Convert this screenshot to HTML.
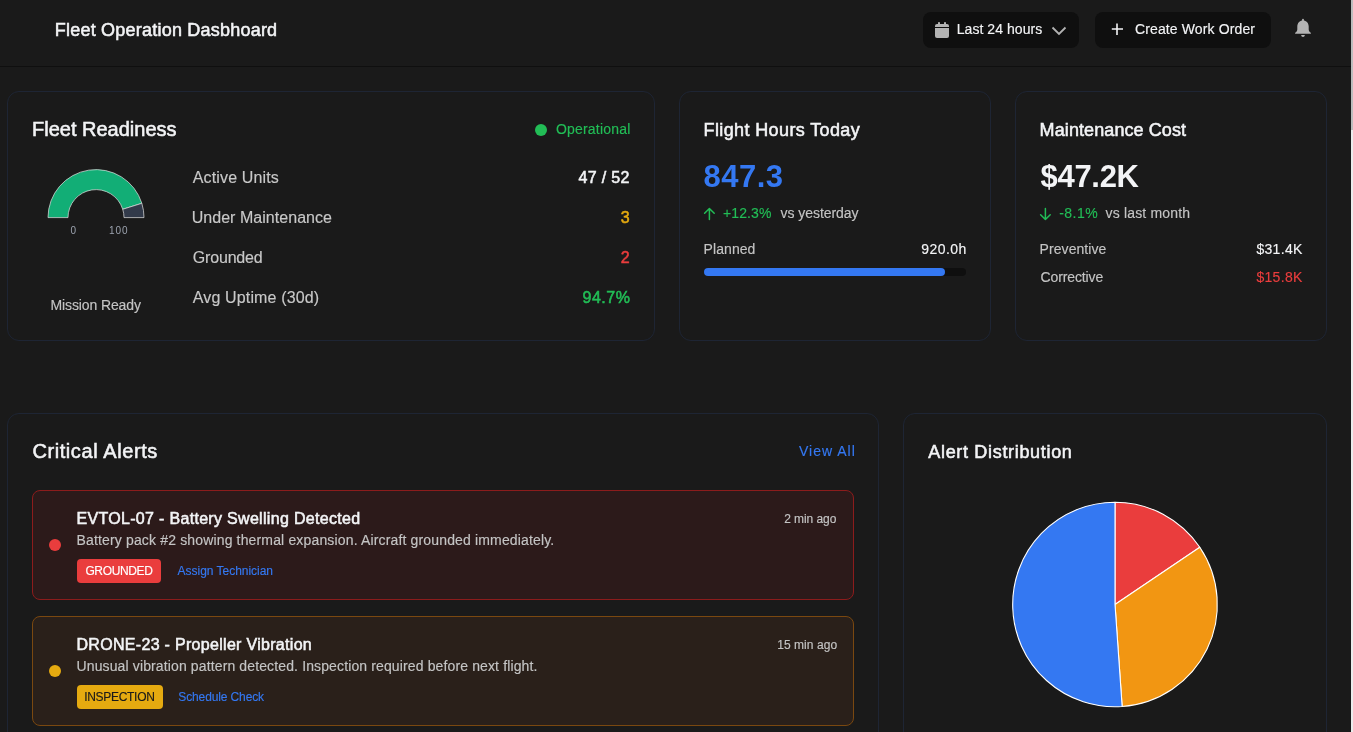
<!DOCTYPE html>
<html><head><meta charset="utf-8">
<style>
html,body{margin:0;padding:0;width:1353px;height:732px;overflow:hidden;background:#1a1a1a;}
body{position:relative;font-family:"Liberation Sans",sans-serif;color:#fff;}
#wrap{position:absolute;left:0;top:0;width:1353px;height:732px;will-change:transform;}
.t{position:absolute;line-height:1;white-space:nowrap;}
.card{position:absolute;box-sizing:border-box;border:1px solid #1e2534;border-radius:12px;}
.btn{position:absolute;background:#0f0f0f;border-radius:8px;}
.alert{position:absolute;box-sizing:border-box;border:1px solid;border-radius:8px;}
.dot{position:absolute;border-radius:50%;}
</style></head><body><div id="wrap">
<div style="position:absolute;left:0;top:66px;width:1353px;height:1px;background:#0f0f0f;"></div>
<div class="btn" style="left:923px;top:12px;width:156px;height:36px;"></div>
<svg style="position:absolute;left:935px;top:21px" width="14" height="17" viewBox="0 0 14 17">
<rect x="0" y="3" width="14" height="14" rx="2" fill="#b3b3b3"/>
<rect x="3" y="1" width="2" height="3" rx="0.8" fill="#b3b3b3"/>
<rect x="9" y="1" width="2" height="3" rx="0.8" fill="#b3b3b3"/>
<rect x="0" y="6" width="14" height="1" fill="#0f0f0f"/>
</svg>
<svg style="position:absolute;left:1051px;top:26px" width="16" height="10" viewBox="0 0 16 10">
<path d="M1.5 1.5 L8 8 L14.5 1.5" fill="none" stroke="#b3b3b3" stroke-width="1.8"/>
</svg>
<div class="btn" style="left:1095px;top:12px;width:176px;height:36px;"></div>
<svg style="position:absolute;left:1110px;top:22px" width="14" height="14" viewBox="0 0 14 14">
<path d="M7 1.5 V13 M1.8 7 H13" stroke="#f3f4f6" stroke-width="1.6" fill="none"/>
</svg>
<svg style="position:absolute;left:1290px;top:15px" width="26" height="26" viewBox="1290 15 26 26">
<rect x="1302.1" y="18.8" width="1.8" height="2.8" rx="0.9" fill="#b3b3b3"/>
<path d="M1303 20.6 C1299.6 20.6 1297.3 23.2 1297.3 26.6 V29.4 C1297.3 30.8 1296.2 32 1295.2 32.8 C1294.9 33.2 1295.1 33.8 1295.6 33.8 H1310.4 C1310.9 33.8 1311.1 33.2 1310.8 32.8 C1309.8 32 1308.7 30.8 1308.7 29.4 V26.6 C1308.7 23.2 1306.4 20.6 1303 20.6 Z" fill="#b3b3b3"/>
<path d="M1301.2 35 H1304.8 C1304.8 36.1 1304 37 1303 37 C1302 37 1301.2 36.1 1301.2 35 Z" fill="#b3b3b3"/>
</svg>
<div style="position:absolute;left:1351px;top:0;width:2px;height:732px;background:#ececec;"></div>
<div style="position:absolute;left:1351px;top:0;width:2px;height:130px;background:#bdbdbd;"></div>

<div class="card" style="left:7px;top:91px;width:648px;height:250px;"></div>
<div class="dot" style="left:535px;top:124px;width:12px;height:12px;background:#22bd56;"></div>
<svg style="position:absolute;left:40px;top:160px" width="112" height="64" viewBox="40 160 112 64">
<path d="M48.00 217.60 A48 48 0 0 1 141.83 203.32 L122.73 209.27 A28 28 0 0 0 68.00 217.60 Z" fill="#12ae76" stroke="#e5e5e5" stroke-width="0.7"/>
<path d="M141.83 203.32 A48 48 0 0 1 144.00 217.60 L124.00 217.60 A28 28 0 0 0 122.73 209.27 Z" fill="#323a4a" stroke="#e5e5e5" stroke-width="0.7"/>
</svg>

<div class="card" style="left:679px;top:91px;width:312px;height:250px;"></div>
<svg style="position:absolute;left:700px;top:204px" width="20" height="20" viewBox="700 204 20 20">
<path d="M709.4 208.6 V219.4 M704.6 213.3 L709.4 208.5 L714.2 213.3" fill="none" stroke="#22bd56" stroke-width="1.5" stroke-linecap="round" stroke-linejoin="round"/>
</svg>
<div style="position:absolute;left:704px;top:268px;width:262px;height:8px;border-radius:4px;background:#0f0f0f;"></div>
<div style="position:absolute;left:704px;top:268px;width:241px;height:8px;border-radius:4px;background:#3478f2;"></div>

<div class="card" style="left:1015px;top:91px;width:312px;height:250px;"></div>
<svg style="position:absolute;left:1036px;top:204px" width="20" height="20" viewBox="1036 204 20 20">
<path d="M1045.4 208.6 V219.4 M1040.6 214.7 L1045.4 219.5 L1050.2 214.7" fill="none" stroke="#22bd56" stroke-width="1.5" stroke-linecap="round" stroke-linejoin="round"/>
</svg>

<div class="card" style="left:7px;top:413px;width:872px;height:340px;"></div>
<div class="alert" style="left:32px;top:490px;width:822px;height:110px;background:#2c1a1a;border-color:#8c1c1c;"></div>
<div class="dot" style="left:49px;top:539px;width:12px;height:12px;background:#ea3d3d;"></div>
<div style="position:absolute;left:77px;top:559px;width:84px;height:24px;border-radius:4px;background:#ea3d3d;"></div>
<div class="alert" style="left:32px;top:616px;width:822px;height:110px;background:#2a201a;border-color:#7a4810;"></div>
<div class="dot" style="left:49px;top:665px;width:12px;height:12px;background:#e5aa10;"></div>
<div style="position:absolute;left:77px;top:685px;width:86px;height:24px;border-radius:4px;background:#e5aa10;"></div>

<div class="card" style="left:903px;top:413px;width:424px;height:340px;"></div>
<svg style="position:absolute;left:1005px;top:494px" width="220" height="220" viewBox="1005 494 220 220">
<path d="M1115 604.5 L1115.00 502.20 A102.3 102.3 0 0 1 1199.81 547.29 Z" fill="#ea3d3d" stroke="#ffffff" stroke-width="1.1" stroke-linejoin="round"/>
<path d="M1115 604.5 L1199.81 547.29 A102.3 102.3 0 0 1 1122.14 706.55 Z" fill="#f29612" stroke="#ffffff" stroke-width="1.1" stroke-linejoin="round"/>
<path d="M1115 604.5 L1122.14 706.55 A102.3 102.3 0 1 1 1115.00 502.20 Z" fill="#3478f2" stroke="#ffffff" stroke-width="1.1" stroke-linejoin="round"/>
</svg>
<div class="t" style="left:54.80px;top:21px;font-size:18px;color:#f3f4f6;letter-spacing:0.217px;-webkit-text-stroke:0.55px currentColor;">Fleet Operation Dasbhoard</div>
<div class="t" style="left:956.70px;top:22px;font-size:14px;color:#f3f4f6;letter-spacing:0.058px;-webkit-text-stroke:0.15px currentColor;">Last 24 hours</div>
<div class="t" style="left:1135.00px;top:22px;font-size:14px;color:#f3f4f6;letter-spacing:0.125px;-webkit-text-stroke:0.15px currentColor;">Create Work Order</div>
<div class="t" style="left:32.00px;top:119px;font-size:20px;color:#f3f4f6;letter-spacing:0.000px;-webkit-text-stroke:0.55px currentColor;">Fleet Readiness</div>
<div class="t" style="left:555.90px;top:122px;font-size:14px;color:#22bd56;letter-spacing:0.210px;-webkit-text-stroke:0.15px currentColor;">Operational</div>
<div class="t" style="left:70.50px;top:226px;font-size:10px;color:#9ca3af;letter-spacing:0.000px;">0</div>
<div class="t" style="left:108.90px;top:226px;font-size:10px;color:#9ca3af;letter-spacing:1.050px;">100</div>
<div class="t" style="left:50.50px;top:298px;font-size:14px;color:#c4c4c4;letter-spacing:-0.117px;-webkit-text-stroke:0.15px currentColor;">Mission Ready</div>
<div class="t" style="left:192.70px;top:170px;font-size:16px;color:#c8c8c8;letter-spacing:0.155px;-webkit-text-stroke:0.15px currentColor;">Active Units</div>
<div class="t" style="left:191.70px;top:210px;font-size:16px;color:#c8c8c8;letter-spacing:0.038px;-webkit-text-stroke:0.15px currentColor;">Under Maintenance</div>
<div class="t" style="left:192.70px;top:250px;font-size:16px;color:#c8c8c8;letter-spacing:-0.157px;-webkit-text-stroke:0.15px currentColor;">Grounded</div>
<div class="t" style="left:192.70px;top:290px;font-size:16px;color:#c8c8c8;letter-spacing:0.153px;-webkit-text-stroke:0.15px currentColor;">Avg Uptime (30d)</div>
<div class="t" style="left:578.60px;top:170px;font-size:16px;color:#f3f4f6;letter-spacing:0.317px;-webkit-text-stroke:0.55px currentColor;">47 / 52</div>
<div class="t" style="left:620.80px;top:210px;font-size:16px;color:#e5aa10;letter-spacing:0.000px;-webkit-text-stroke:0.55px currentColor;">3</div>
<div class="t" style="left:620.80px;top:250px;font-size:16px;color:#ea3d3d;letter-spacing:0.000px;-webkit-text-stroke:0.55px currentColor;">2</div>
<div class="t" style="left:582.50px;top:290px;font-size:16px;color:#22bd56;letter-spacing:0.500px;-webkit-text-stroke:0.55px currentColor;">94.7%</div>
<div class="t" style="left:703.60px;top:121px;font-size:18px;color:#f3f4f6;letter-spacing:0.376px;-webkit-text-stroke:0.55px currentColor;">Flight Hours Today</div>
<div class="t" style="left:703.60px;top:161px;font-size:31px;color:#3478f2;letter-spacing:0.475px;font-weight:bold;">847.3</div>
<div class="t" style="left:723.00px;top:206px;font-size:14px;color:#22bd56;letter-spacing:0.100px;-webkit-text-stroke:0.15px currentColor;">+12.3%</div>
<div class="t" style="left:780.50px;top:206px;font-size:14px;color:#c4c4c4;letter-spacing:-0.045px;-webkit-text-stroke:0.15px currentColor;">vs yesterday</div>
<div class="t" style="left:703.60px;top:242px;font-size:14px;color:#c4c4c4;letter-spacing:0.067px;-webkit-text-stroke:0.15px currentColor;">Planned</div>
<div class="t" style="left:921.30px;top:242px;font-size:14px;color:#f3f4f6;letter-spacing:0.440px;-webkit-text-stroke:0.15px currentColor;">920.0h</div>
<div class="t" style="left:1039.60px;top:121px;font-size:18px;color:#f3f4f6;letter-spacing:0.093px;-webkit-text-stroke:0.55px currentColor;">Maintenance Cost</div>
<div class="t" style="left:1040.60px;top:161px;font-size:31px;color:#f3f4f6;letter-spacing:-0.320px;font-weight:bold;">$47.2K</div>
<div class="t" style="left:1059.20px;top:206px;font-size:14px;color:#22bd56;letter-spacing:0.475px;-webkit-text-stroke:0.15px currentColor;">-8.1%</div>
<div class="t" style="left:1105.60px;top:206px;font-size:14px;color:#c4c4c4;letter-spacing:0.158px;-webkit-text-stroke:0.15px currentColor;">vs last month</div>
<div class="t" style="left:1039.60px;top:242px;font-size:14px;color:#c4c4c4;letter-spacing:0.067px;-webkit-text-stroke:0.15px currentColor;">Preventive</div>
<div class="t" style="left:1256.40px;top:242px;font-size:14px;color:#f3f4f6;letter-spacing:0.320px;-webkit-text-stroke:0.15px currentColor;">$31.4K</div>
<div class="t" style="left:1040.60px;top:270px;font-size:14px;color:#c4c4c4;letter-spacing:-0.133px;-webkit-text-stroke:0.15px currentColor;">Corrective</div>
<div class="t" style="left:1256.40px;top:270px;font-size:14px;color:#ea3d3d;letter-spacing:0.320px;-webkit-text-stroke:0.15px currentColor;">$15.8K</div>
<div class="t" style="left:32.40px;top:441px;font-size:20px;color:#f3f4f6;letter-spacing:0.586px;-webkit-text-stroke:0.55px currentColor;">Critical Alerts</div>
<div class="t" style="left:799.00px;top:444px;font-size:14px;color:#3478f2;letter-spacing:1.000px;-webkit-text-stroke:0.15px currentColor;">View All</div>
<div class="t" style="left:76.50px;top:511px;font-size:16px;color:#f3f4f6;letter-spacing:0.311px;-webkit-text-stroke:0.55px currentColor;">EVTOL-07 - Battery Swelling Detected</div>
<div class="t" style="left:76.50px;top:533px;font-size:14px;color:#c4c4c4;letter-spacing:0.154px;-webkit-text-stroke:0.15px currentColor;">Battery pack #2 showing thermal expansion. Aircraft grounded immediately.</div>
<div class="t" style="left:784.20px;top:513px;font-size:12px;color:#c4c4c4;letter-spacing:-0.062px;-webkit-text-stroke:0.15px currentColor;">2 min ago</div>
<div class="t" style="left:85.40px;top:565px;font-size:12px;color:#ffffff;letter-spacing:-0.357px;-webkit-text-stroke:0.15px currentColor;">GROUNDED</div>
<div class="t" style="left:177.60px;top:565px;font-size:12px;color:#3478f2;letter-spacing:-0.025px;-webkit-text-stroke:0.15px currentColor;">Assign Technician</div>
<div class="t" style="left:76.50px;top:637px;font-size:16px;color:#f3f4f6;letter-spacing:0.303px;-webkit-text-stroke:0.55px currentColor;">DRONE-23 - Propeller Vibration</div>
<div class="t" style="left:76.50px;top:659px;font-size:14px;color:#c4c4c4;letter-spacing:0.128px;-webkit-text-stroke:0.15px currentColor;">Unusual vibration pattern detected. Inspection required before next flight.</div>
<div class="t" style="left:777.20px;top:639px;font-size:12px;color:#c4c4c4;letter-spacing:0.056px;-webkit-text-stroke:0.15px currentColor;">15 min ago</div>
<div class="t" style="left:84.20px;top:691px;font-size:12px;color:#1a1a1a;letter-spacing:-0.300px;-webkit-text-stroke:0.15px currentColor;">INSPECTION</div>
<div class="t" style="left:178.30px;top:691px;font-size:12px;color:#3478f2;letter-spacing:-0.123px;-webkit-text-stroke:0.15px currentColor;">Schedule Check</div>
<div class="t" style="left:928.30px;top:443px;font-size:18px;color:#f3f4f6;letter-spacing:0.676px;-webkit-text-stroke:0.55px currentColor;">Alert Distribution</div>
</div></body></html>
